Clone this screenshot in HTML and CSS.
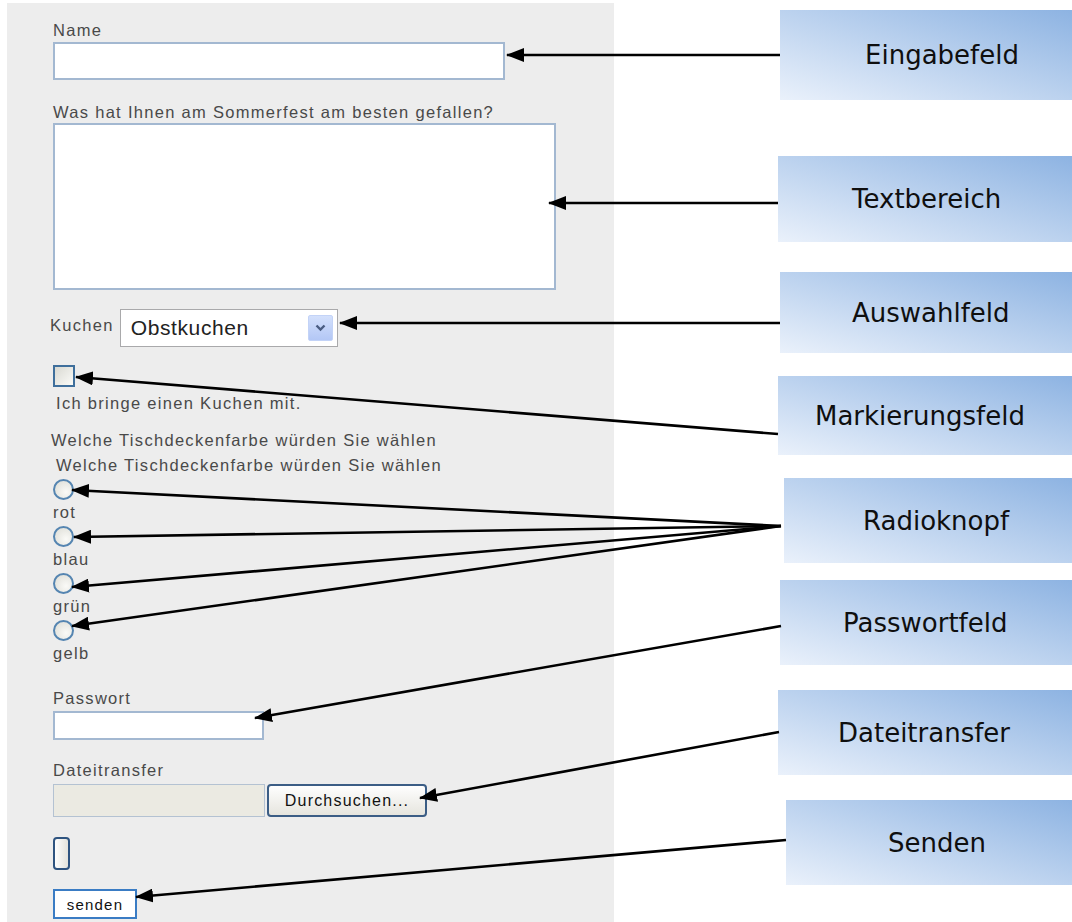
FILE: index.html
```html
<!DOCTYPE html>
<html lang="de">
<head>
    <meta charset="UTF-8">
    <title>Formularelemente</title>
    <link rel="stylesheet" href="styles.css">
</head>
<body>
    <div class="page">
        <form class="panel">
            <label class="lbl">Name</label>
            <input type="text" class="field name">

            <label class="lbl lbl-gap">Was hat Ihnen am Sommerfest am besten gefallen?</label>
            <textarea class="area"></textarea>

            <div class="row-kuchen">
                <label class="lbl lbl-kuchen">Kuchen</label>
                <div class="select">
                    <span class="select-val">Obstkuchen</span>
                    <span class="select-btn">
                        <svg width="11" height="8" viewBox="0 0 11 8"><path d="M1.5 1.5 L5.5 5.5 L9.5 1.5" fill="none" stroke="#4a5d82" stroke-width="2.4"/></svg>
                    </span>
                </div>
            </div>

            <input type="checkbox" class="check">
            <label class="lbl lbl-indent lbl-near">Ich bringe einen Kuchen mit.</label>

            <label class="lbl lbl-welche">Welche Tischdeckenfarbe würden Sie wählen</label>
            <label class="lbl lbl-indent lbl-welche2">Welche Tischdeckenfarbe würden Sie wählen</label>

            <input type="radio" name="farbe" class="radio">
            <label class="lbl lbl-radio">rot</label>
            <input type="radio" name="farbe" class="radio">
            <label class="lbl lbl-radio">blau</label>
            <input type="radio" name="farbe" class="radio">
            <label class="lbl lbl-radio">grün</label>
            <input type="radio" name="farbe" class="radio">
            <label class="lbl lbl-radio">gelb</label>

            <label class="lbl lbl-pass">Passwort</label>
            <input type="password" class="field pass">

            <label class="lbl lbl-datei">Dateitransfer</label>
            <div class="file-row">
                <span class="file-text"></span>
                <button type="button" class="file-btn">Durchsuchen...</button>
            </div>

            <button type="button" class="small-btn"></button>
            <button type="button" class="send-btn">senden</button>
        </form>

        <div class="callout c1">Eingabefeld</div>
        <div class="callout c2">Textbereich</div>
        <div class="callout c3">Auswahlfeld</div>
        <div class="callout c4">Markierungsfeld</div>
        <div class="callout c5">Radioknopf</div>
        <div class="callout c6">Passwortfeld</div>
        <div class="callout c7">Dateitransfer</div>
        <div class="callout c8">Senden</div>

        <svg class="arrows" width="1072" height="922" viewBox="0 0 1072 922">
            <defs>
                <marker id="head" markerUnits="userSpaceOnUse" markerWidth="18" markerHeight="14" refX="17" refY="7" orient="auto">
                    <path d="M0 0 L18 7 L0 14 Z" fill="#000"/>
                </marker>
            </defs>
            <g stroke="#000" stroke-width="2.6" fill="none" marker-end="url(#head)">
                <line x1="780" y1="55" x2="507" y2="55"/>
                <line x1="778" y1="203" x2="549" y2="203"/>
                <line x1="780" y1="323" x2="340" y2="323"/>
                <line x1="778" y1="434" x2="76" y2="377"/>
                <line x1="781" y1="526" x2="72" y2="490"/>
                <line x1="781" y1="526" x2="74" y2="537"/>
                <line x1="781" y1="526" x2="72" y2="587"/>
                <line x1="781" y1="526" x2="72" y2="626"/>
                <line x1="781" y1="626" x2="255" y2="718"/>
                <line x1="779" y1="732" x2="420" y2="798"/>
                <line x1="786" y1="840" x2="136" y2="897"/>
            </g>
        </svg>
    </div>
</body>
</html>
```

FILE: styles.css
```css
html, body {
    margin: 0;
    padding: 0;
    background: #fff;
    overflow: hidden;
}
.page {
    position: relative;
    display: flow-root;
    width: 1072px;
    height: 922px;
    font-family: 'Liberation Sans', Arial, sans-serif;
}
.panel {
    display: flex;
    flex-direction: column;
    align-items: flex-start;
    width: 607px;
    height: 919px;
    margin: 3px 0 0 7px;
    padding: 17px 0 0 46px;
    box-sizing: border-box;
    background: #ededed;
}
.lbl {
    display: block;
    font-size: 16.5px;
    letter-spacing: 1.3px;
    line-height: 20px;
    color: #494949;
    white-space: nowrap;
}
.lbl-gap { margin-top: 22px; }
.lbl-indent { padding-left: 3px; }
.lbl-near { margin-top: 6px; }
.lbl-welche { margin-top: 17px; margin-left: -2px; }
.lbl-welche2 { margin-top: 5px; }
.lbl-radio { margin-top: 2px; }
.lbl-pass { margin-top: 25px; }
.lbl-datei { margin-top: 20px; }

.field {
    box-sizing: border-box;
    margin: 0;
    border: 2px solid #a3b8d1;
    background: #fff;
}
.name {
    width: 452px;
    height: 38px;
    margin-top: 2px;
}
.area {
    box-sizing: border-box;
    width: 503px;
    height: 167px;
    margin: 1px 0 0;
    border: 2px solid #a3b8d1;
    background: #fff;
    resize: none;
}
.row-kuchen {
    display: flex;
    align-items: center;
    margin-top: 19px;
}
.lbl-kuchen {
    margin-left: -3px;
    margin-right: 6px;
    margin-top: -6px;
}
.select {
    box-sizing: border-box;
    display: flex;
    align-items: center;
    justify-content: space-between;
    width: 218px;
    height: 38px;
    padding: 0 4px 0 10px;
    border: 1px solid #a9a9ab;
    background: #fff;
}
.select-val {
    font-size: 21px;
    letter-spacing: 0.6px;
    color: #222;
}
.select-btn {
    box-sizing: border-box;
    display: flex;
    align-items: center;
    justify-content: center;
    width: 25px;
    height: 26px;
    border: 1px solid #c3d3f7;
    border-radius: 2px;
    background: linear-gradient(to bottom, #d3e0fc, #b3c7f5);
}
.check {
    appearance: none;
    box-sizing: border-box;
    width: 22px;
    height: 22px;
    margin: 18px 0 0;
    border: 2px solid #3f6f9c;
    background: linear-gradient(135deg, #d9d9d2, #fbfbf8);
}
.radio {
    appearance: none;
    box-sizing: border-box;
    width: 21px;
    height: 21px;
    margin: 4px 0 0;
    border: 2px solid #5585b1;
    border-radius: 50%;
    background: radial-gradient(circle at 65% 65%, #fafaf7, #dcdcd5);
}
.pass {
    width: 211px;
    height: 29px;
    margin-top: 3px;
}
.file-row {
    display: flex;
    gap: 2px;
    margin-top: 4px;
}
.file-text {
    box-sizing: border-box;
    width: 212px;
    height: 33px;
    border: 1px solid #b4c2d2;
    background: #ebeae2;
}
.file-btn {
    box-sizing: border-box;
    width: 160px;
    height: 33px;
    border: 2px solid #3b5d85;
    border-radius: 4px;
    background: linear-gradient(to bottom, #fefefe, #e6e5de);
    font-family: 'Liberation Sans', Arial, sans-serif;
    font-size: 16px;
    letter-spacing: 1.2px;
    color: #111;
    padding: 0;
}
.small-btn {
    box-sizing: border-box;
    width: 17px;
    height: 33px;
    margin-top: 20px;
    padding: 0;
    border: 2px solid #2f5480;
    border-radius: 4px;
    background: linear-gradient(to right, #fefefe, #e4e3dc);
}
.send-btn {
    box-sizing: border-box;
    width: 84px;
    height: 30px;
    margin-top: 19px;
    padding: 0;
    border: 2px solid #3a7cc4;
    background: #fff;
    font-family: 'Liberation Sans', Arial, sans-serif;
    font-size: 15px;
    letter-spacing: 1.2px;
    color: #111;
}

.callout {
    position: absolute;
    display: flex;
    align-items: center;
    box-sizing: border-box;
    right: 0;
    background: linear-gradient(to top right, #eaf1fb, #8db3e2);
    font-family: 'DejaVu Sans', Verdana, sans-serif;
    font-size: 26px;
    color: #0f0f0f;
}
.c1 { left: 780px; top: 10px;  height: 90px; padding-left: 85px; }
.c2 { left: 778px; top: 156px; height: 86px; padding-left: 74px; }
.c3 { left: 780px; top: 272px; height: 81px; padding-left: 72px; }
.c4 { left: 778px; top: 376px; height: 79px; padding-left: 37px; }
.c5 { left: 784px; top: 478px; height: 85px; padding-left: 79px; }
.c6 { left: 780px; top: 580px; height: 85px; padding-left: 63px; }
.c7 { left: 778px; top: 690px; height: 85px; padding-left: 60px; }
.c8 { left: 786px; top: 800px; height: 85px; padding-left: 102px; }

.arrows {
    position: absolute;
    top: 0;
    left: 0;
    pointer-events: none;
}
```
